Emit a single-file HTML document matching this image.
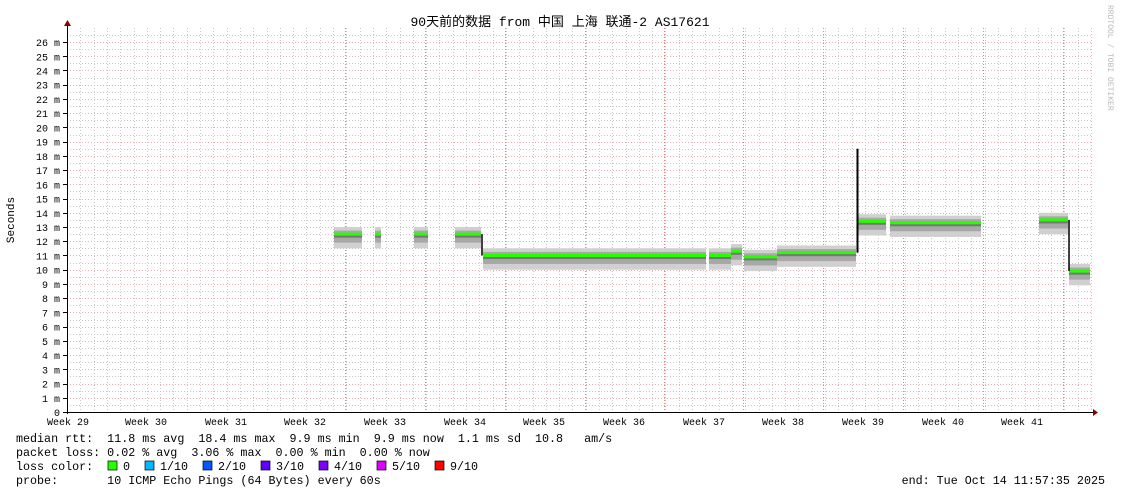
<!DOCTYPE html><html><head><style>
body{margin:0;background:#fff;width:1121px;height:494px;overflow:hidden;font-family:"Liberation Mono","DejaVu Sans Mono","Noto Sans CJK SC",monospace;}
svg text{font-family:"Liberation Mono","DejaVu Sans Mono","Noto Sans CJK SC",monospace;}
</style></head><body>
<svg width="1121" height="494" xmlns="http://www.w3.org/2000/svg">
<text x="560" y="26" font-size="13" text-anchor="middle" fill="#000">90天前的数据 from 中国 上海 联通-2 AS17621</text>
<text x="1108" y="5" font-size="8" fill="#bbb" transform="rotate(90 1108 5)">RRDTOOL / TOBI OETIKER</text>
<text x="14" y="220" font-size="11" fill="#000" text-anchor="middle" transform="rotate(-90 14 220)">Seconds</text>
<g id="grid"></g>
<g id="data"></g>
<line x1="67" y1="412.5" x2="1095" y2="412.5" stroke="#000"/>
<line x1="67.5" y1="24" x2="67.5" y2="414" stroke="#000"/>
<polygon points="1093,409 1098,412.5 1093,416" fill="#800"/>
<polygon points="64,26 67.5,20 71,26" fill="#800"/>
<g id="labels" font-size="10" fill="#000"></g>
<g font-size="11.7" fill="#000">
<text x="16" y="442" xml:space="preserve">median rtt:  11.8 ms avg  18.4 ms max  9.9 ms min  9.9 ms now  1.1 ms sd  10.8   am/s</text>
<text x="16" y="456" xml:space="preserve">packet loss: 0.02 % avg  3.06 % max  0.00 % min  0.00 % now</text>
<text x="16" y="470" xml:space="preserve">loss color:  </text>
<text x="16" y="484" xml:space="preserve">probe:       10 ICMP Echo Pings (64 Bytes) every 60s</text>
<text x="1105" y="484" text-anchor="end">end: Tue Oct 14 11:57:35 2025</text>
</g>
<g font-size="11.7">
<rect x="108" y="461" width="9" height="9" fill="#26ff00" stroke="#000" stroke-width="0.7"/><text x="123" y="470">0</text>
<rect x="145" y="461" width="9" height="9" fill="#00b8ff" stroke="#000" stroke-width="0.7"/><text x="160" y="470">1/10</text>
<rect x="203" y="461" width="9" height="9" fill="#0059ff" stroke="#000" stroke-width="0.7"/><text x="218" y="470">2/10</text>
<rect x="261" y="461" width="9" height="9" fill="#5e00ff" stroke="#000" stroke-width="0.7"/><text x="276" y="470">3/10</text>
<rect x="319" y="461" width="9" height="9" fill="#7e00ff" stroke="#000" stroke-width="0.7"/><text x="334" y="470">4/10</text>
<rect x="377" y="461" width="9" height="9" fill="#dd00ff" stroke="#000" stroke-width="0.7"/><text x="392" y="470">5/10</text>
<rect x="435" y="461" width="9" height="9" fill="#ff0000" stroke="#000" stroke-width="0.7"/><text x="450" y="470">9/10</text>
</g>
</svg>
<script>
var NS="http://www.w3.org/2000/svg";
function el(p,t,a){var e=document.createElementNS(NS,t);for(var k in a)e.setAttribute(k,a[k]);p.appendChild(e);return e;}
var g=document.getElementById('grid'),d=document.getElementById('data'),L=document.getElementById('labels');
function Y(v){return 412-v*14.23;}
for(var i=1;i<=53;i++){var y=Math.round(412-i*7.115)+0.5;el(g,'line',{x1:67,x2:1093,y1:y,y2:y,stroke:i%2?'#c8c8c8':'#e8b0b0','stroke-dasharray':'1,2'});}
for(var x=67+13.3;x<1093;x+=13.3){el(g,'line',{x1:Math.round(x)+.5,x2:Math.round(x)+.5,y1:28,y2:412,stroke:'#c8c8c8','stroke-dasharray':'1,2'});}
[345,425,505,585,664,743,823,903,983,1063].forEach(function(x){el(g,'line',{x1:x+.5,x2:x+.5,y1:28,y2:412,stroke:'#f08080','stroke-dasharray':'1,2'});});
for(var v=0;v<=26;v++){var t=el(L,'text',{x:60,y:Y(v)+4,'text-anchor':'end'});t.textContent=v==0?'0':v+' m';el(L,'line',{x1:63,x2:67,y1:Math.round(Y(v))+.5,y2:Math.round(Y(v))+.5,stroke:'#000'});}
var wk=[68,146,226,305,385,465,544,624,704,783,863,943,1022];
wk.forEach(function(x,i){var t=el(L,'text',{x:x,y:425,'text-anchor':'middle'});t.textContent='Week '+(29+i);});
var segs=[[334,362,12.5],[375,381,12.5],[414,428,12.5],[455,481,12.5],[483,706,11.0],[709,731,11.0],[731,742,11.3],[744,777,10.9],[777,856,11.2],[858,886,13.4],[890,981,13.3],[1039,1068,13.5],[1069,1090,9.9]];
segs.forEach(function(s){var w=s[1]-s[0];
el(d,'rect',{x:s[0],y:Y(s[2]+0.5),width:w,height:Y(s[2]-1.0)-Y(s[2]+0.5),fill:'#d0d0d0'});
el(d,'rect',{x:s[0],y:Y(s[2]+0.25),width:w,height:Y(s[2]-0.6)-Y(s[2]+0.25),fill:'#a8a8a8'});
el(d,'rect',{x:s[0],y:Y(s[2]+0.08),width:w,height:Y(s[2]-0.25)-Y(s[2]+0.08),fill:'#777'});
el(d,'rect',{x:s[0],y:Y(s[2])-1.5,width:w,height:3,fill:'#26ff00'});});
el(d,'line',{x1:482,x2:482,y1:Y(12.5),y2:Y(11),stroke:'#000','stroke-width':1.5});
el(d,'line',{x1:857.5,x2:857.5,y1:Y(18.5),y2:Y(11.2),stroke:'#000','stroke-width':2});
el(d,'line',{x1:1069,x2:1069,y1:Y(13.5),y2:Y(9.9),stroke:'#000','stroke-width':1.5});
</script>
</body></html>
